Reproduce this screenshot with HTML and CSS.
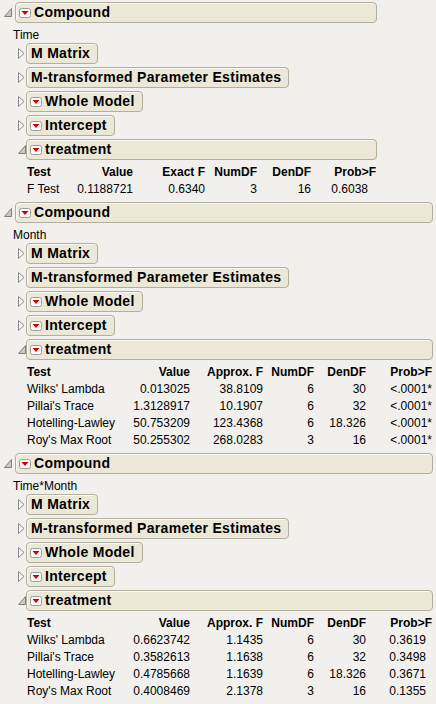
FILE: index.html
```html
<!DOCTYPE html>
<html>
<head>
<meta charset="utf-8">
<link rel="stylesheet" href="styles.css">
</head>
<body>
<main class="report">

  <!-- Block 1 : Time -->
  <section class="outline">
    <div class="orow">
      <span class="twisty"><svg class="tri-open" width="8" height="9" viewBox="0 0 8 9"><path d="M7.5 0.5V8.5H0.5Z"/></svg></span>
      <div class="obox w1"><svg class="menu" width="12" height="10" viewBox="0 0 12 10"><rect x="0.5" y="0.5" width="11" height="9" rx="2"/><path d="M2.5 3H9.5L6 7Z"/></svg><span class="title">Compound</span></div>
    </div>
    <div class="obody">
      <div class="label">Time</div>
      <div class="orow sub">
        <span class="twisty s"><svg class="tri-closed" width="7" height="11" viewBox="0 0 7 11"><path d="M0.5 0.5L6 5.5L0.5 10.5Z"/></svg></span>
        <div class="obox"><span class="title">M Matrix</span></div>
      </div>
      <div class="orow sub">
        <span class="twisty s"><svg class="tri-closed" width="7" height="11" viewBox="0 0 7 11"><path d="M0.5 0.5L6 5.5L0.5 10.5Z"/></svg></span>
        <div class="obox"><span class="title">M-transformed Parameter Estimates</span></div>
      </div>
      <div class="orow sub">
        <span class="twisty s"><svg class="tri-closed" width="7" height="11" viewBox="0 0 7 11"><path d="M0.5 0.5L6 5.5L0.5 10.5Z"/></svg></span>
        <div class="obox"><svg class="menu" width="12" height="10" viewBox="0 0 12 10"><rect x="0.5" y="0.5" width="11" height="9" rx="2"/><path d="M2.5 3H9.5L6 7Z"/></svg><span class="title">Whole Model</span></div>
      </div>
      <div class="orow sub">
        <span class="twisty s"><svg class="tri-closed" width="7" height="11" viewBox="0 0 7 11"><path d="M0.5 0.5L6 5.5L0.5 10.5Z"/></svg></span>
        <div class="obox"><svg class="menu" width="12" height="10" viewBox="0 0 12 10"><rect x="0.5" y="0.5" width="11" height="9" rx="2"/><path d="M2.5 3H9.5L6 7Z"/></svg><span class="title">Intercept</span></div>
      </div>
      <div class="orow sub">
        <span class="twisty s"><svg class="tri-open" width="8" height="9" viewBox="0 0 8 9"><path d="M7.5 0.5V8.5H0.5Z"/></svg></span>
        <div class="obox t1"><svg class="menu" width="12" height="10" viewBox="0 0 12 10"><rect x="0.5" y="0.5" width="11" height="9" rx="2"/><path d="M2.5 3H9.5L6 7Z"/></svg><span class="title">treatment</span></div>
      </div>
      <div class="stats g1">
        <span class="c1 th">Test</span><span class="th">Value</span><span class="th">Exact F</span><span class="th">NumDF</span><span class="th">DenDF</span><span class="th">Prob&gt;F</span>
        <span class="c1">F Test</span><span>0.1188721</span><span>0.6340</span><span>3</span><span>16</span><span class="p p1">0.6038</span>
      </div>
    </div>
  </section>

  <!-- Block 2 : Month -->
  <section class="outline">
    <div class="orow">
      <span class="twisty"><svg class="tri-open" width="8" height="9" viewBox="0 0 8 9"><path d="M7.5 0.5V8.5H0.5Z"/></svg></span>
      <div class="obox w2"><svg class="menu" width="12" height="10" viewBox="0 0 12 10"><rect x="0.5" y="0.5" width="11" height="9" rx="2"/><path d="M2.5 3H9.5L6 7Z"/></svg><span class="title">Compound</span></div>
    </div>
    <div class="obody">
      <div class="label">Month</div>
      <div class="orow sub">
        <span class="twisty s"><svg class="tri-closed" width="7" height="11" viewBox="0 0 7 11"><path d="M0.5 0.5L6 5.5L0.5 10.5Z"/></svg></span>
        <div class="obox"><span class="title">M Matrix</span></div>
      </div>
      <div class="orow sub">
        <span class="twisty s"><svg class="tri-closed" width="7" height="11" viewBox="0 0 7 11"><path d="M0.5 0.5L6 5.5L0.5 10.5Z"/></svg></span>
        <div class="obox"><span class="title">M-transformed Parameter Estimates</span></div>
      </div>
      <div class="orow sub">
        <span class="twisty s"><svg class="tri-closed" width="7" height="11" viewBox="0 0 7 11"><path d="M0.5 0.5L6 5.5L0.5 10.5Z"/></svg></span>
        <div class="obox"><svg class="menu" width="12" height="10" viewBox="0 0 12 10"><rect x="0.5" y="0.5" width="11" height="9" rx="2"/><path d="M2.5 3H9.5L6 7Z"/></svg><span class="title">Whole Model</span></div>
      </div>
      <div class="orow sub">
        <span class="twisty s"><svg class="tri-closed" width="7" height="11" viewBox="0 0 7 11"><path d="M0.5 0.5L6 5.5L0.5 10.5Z"/></svg></span>
        <div class="obox"><svg class="menu" width="12" height="10" viewBox="0 0 12 10"><rect x="0.5" y="0.5" width="11" height="9" rx="2"/><path d="M2.5 3H9.5L6 7Z"/></svg><span class="title">Intercept</span></div>
      </div>
      <div class="orow sub">
        <span class="twisty s"><svg class="tri-open" width="8" height="9" viewBox="0 0 8 9"><path d="M7.5 0.5V8.5H0.5Z"/></svg></span>
        <div class="obox t2"><svg class="menu" width="12" height="10" viewBox="0 0 12 10"><rect x="0.5" y="0.5" width="11" height="9" rx="2"/><path d="M2.5 3H9.5L6 7Z"/></svg><span class="title">treatment</span></div>
      </div>
      <div class="stats g2">
        <span class="c1 th">Test</span><span class="th">Value</span><span class="th">Approx. F</span><span class="th">NumDF</span><span class="th">DenDF</span><span class="th">Prob&gt;F</span>
        <span class="c1">Wilks' Lambda</span><span>0.013025</span><span>38.8109</span><span>6</span><span>30</span><span>&lt;.0001*</span>
        <span class="c1">Pillai's Trace</span><span>1.3128917</span><span>10.1907</span><span>6</span><span>32</span><span>&lt;.0001*</span>
        <span class="c1">Hotelling-Lawley</span><span>50.753209</span><span>123.4368</span><span>6</span><span>18.326</span><span>&lt;.0001*</span>
        <span class="c1">Roy's Max Root</span><span>50.255302</span><span>268.0283</span><span>3</span><span>16</span><span>&lt;.0001*</span>
      </div>
    </div>
  </section>

  <!-- Block 3 : Time*Month -->
  <section class="outline">
    <div class="orow">
      <span class="twisty"><svg class="tri-open" width="8" height="9" viewBox="0 0 8 9"><path d="M7.5 0.5V8.5H0.5Z"/></svg></span>
      <div class="obox w2"><svg class="menu" width="12" height="10" viewBox="0 0 12 10"><rect x="0.5" y="0.5" width="11" height="9" rx="2"/><path d="M2.5 3H9.5L6 7Z"/></svg><span class="title">Compound</span></div>
    </div>
    <div class="obody">
      <div class="label">Time*Month</div>
      <div class="orow sub">
        <span class="twisty s"><svg class="tri-closed" width="7" height="11" viewBox="0 0 7 11"><path d="M0.5 0.5L6 5.5L0.5 10.5Z"/></svg></span>
        <div class="obox"><span class="title">M Matrix</span></div>
      </div>
      <div class="orow sub">
        <span class="twisty s"><svg class="tri-closed" width="7" height="11" viewBox="0 0 7 11"><path d="M0.5 0.5L6 5.5L0.5 10.5Z"/></svg></span>
        <div class="obox"><span class="title">M-transformed Parameter Estimates</span></div>
      </div>
      <div class="orow sub">
        <span class="twisty s"><svg class="tri-closed" width="7" height="11" viewBox="0 0 7 11"><path d="M0.5 0.5L6 5.5L0.5 10.5Z"/></svg></span>
        <div class="obox"><svg class="menu" width="12" height="10" viewBox="0 0 12 10"><rect x="0.5" y="0.5" width="11" height="9" rx="2"/><path d="M2.5 3H9.5L6 7Z"/></svg><span class="title">Whole Model</span></div>
      </div>
      <div class="orow sub">
        <span class="twisty s"><svg class="tri-closed" width="7" height="11" viewBox="0 0 7 11"><path d="M0.5 0.5L6 5.5L0.5 10.5Z"/></svg></span>
        <div class="obox"><svg class="menu" width="12" height="10" viewBox="0 0 12 10"><rect x="0.5" y="0.5" width="11" height="9" rx="2"/><path d="M2.5 3H9.5L6 7Z"/></svg><span class="title">Intercept</span></div>
      </div>
      <div class="orow sub">
        <span class="twisty s"><svg class="tri-open" width="8" height="9" viewBox="0 0 8 9"><path d="M7.5 0.5V8.5H0.5Z"/></svg></span>
        <div class="obox t2"><svg class="menu" width="12" height="10" viewBox="0 0 12 10"><rect x="0.5" y="0.5" width="11" height="9" rx="2"/><path d="M2.5 3H9.5L6 7Z"/></svg><span class="title">treatment</span></div>
      </div>
      <div class="stats g2">
        <span class="c1 th">Test</span><span class="th">Value</span><span class="th">Approx. F</span><span class="th">NumDF</span><span class="th">DenDF</span><span class="th">Prob&gt;F</span>
        <span class="c1">Wilks' Lambda</span><span>0.6623742</span><span>1.1435</span><span>6</span><span>30</span><span class="p">0.3619</span>
        <span class="c1">Pillai's Trace</span><span>0.3582613</span><span>1.1638</span><span>6</span><span>32</span><span class="p">0.3498</span>
        <span class="c1">Hotelling-Lawley</span><span>0.4785668</span><span>1.1639</span><span>6</span><span>18.326</span><span class="p">0.3671</span>
        <span class="c1">Roy's Max Root</span><span>0.4008469</span><span>2.1378</span><span>3</span><span>16</span><span class="p">0.1355</span>
      </div>
    </div>
  </section>

</main>
</body>
</html>
```

FILE: styles.css
```css
html, body {
  margin: 0;
  padding: 0;
}

body {
  background: #f1f0ec;
  color: #000;
  font-family: "Liberation Sans", Arial, sans-serif;
  width: 436px;
  height: 704px;
  overflow: hidden;
}

.report {
  padding: 2px 0 0 4px;
}

.orow {
  display: flex;
  align-items: center;
  height: 21px;
}

.orow.sub {
  margin-left: 13px;
}

.sub + .sub {
  margin-top: 3px;
}

.twisty {
  width: 11px;
  flex: none;
  display: flex;
  align-items: center;
  height: 21px;
}

.twisty.s {
  width: 9px;
  padding-left: 1px;
  box-sizing: border-box;
}

.tri-open path {
  fill: #c9c9c9;
  stroke: #7e7e7e;
  stroke-width: 1;
}

.tri-closed path {
  fill: #f6f6f6;
  stroke: #8a8a8a;
  stroke-width: 1;
}

.obox {
  display: inline-flex;
  align-items: center;
  height: 21px;
  box-sizing: border-box;
  border: 1px solid #b1ae9e;
  border-radius: 4px;
  background: #ebe8d8;
  box-shadow: inset 1px 1px 0 #fbfaf5;
  padding: 0 7px 0 3px;
}

.obox.w1 { width: 362px; }
.obox.w2 { width: 418px; }
.obox.t1 { width: 351px; }
.obox.t2 { width: 407px; }

.menu {
  flex: none;
  margin-right: 3px;
}

.menu rect {
  fill: #fafafa;
  stroke: #9c9c9c;
}

.menu path {
  fill: #d00000;
}

.title {
  font-weight: bold;
  font-size: 14px;
  letter-spacing: 0.3px;
  line-height: 19px;
  white-space: nowrap;
}

.obox > .title:first-child {
  margin-left: 1px;
}

.label {
  font-size: 12px;
  height: 20px;
  line-height: 16px;
  padding-top: 4px;
  box-sizing: border-box;
  margin-left: 9px;
}

.stats {
  display: grid;
  margin: 4px 0 4px 23px;
  font-size: 12px;
}

.stats > span {
  height: 17px;
  line-height: 17px;
  text-align: right;
  white-space: nowrap;
}

.stats > .c1 {
  text-align: left;
}

.stats > .th {
  font-weight: bold;
}

.g1 {
  grid-template-columns: 50px 56px 72px 52px 54px 65px;
}

.g2 {
  grid-template-columns: 98px 65px 73px 51px 52px 66px;
}

.stats > .p {
  padding-right: 6px;
}

.stats > .p1 {
  padding-right: 8px;
}
```
